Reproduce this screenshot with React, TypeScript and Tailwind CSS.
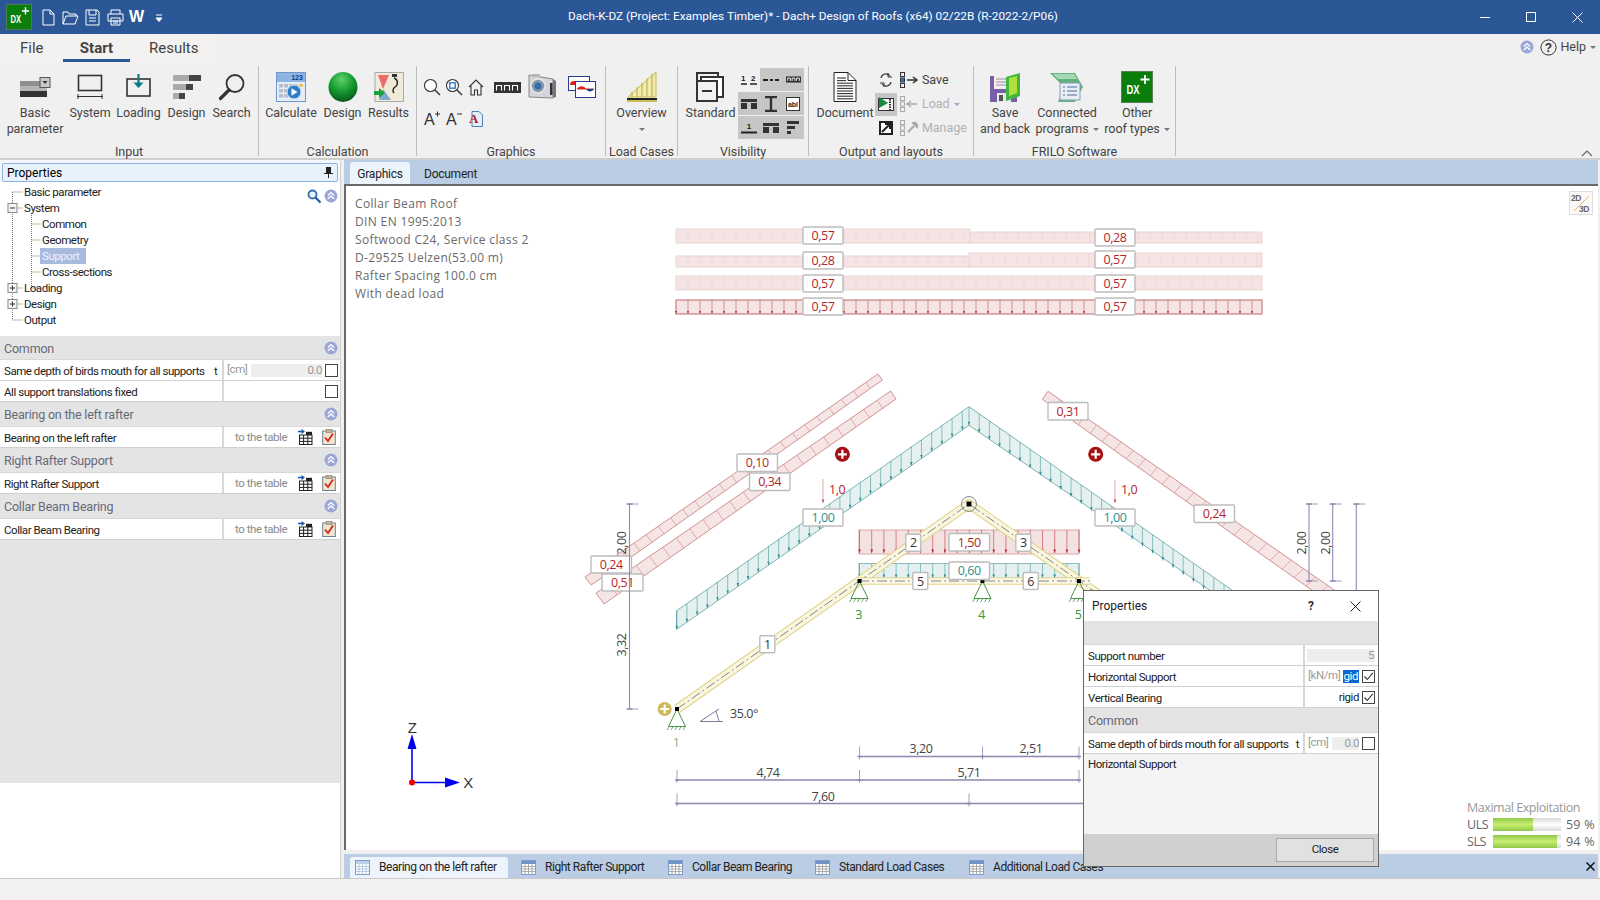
import type { ReactNode } from 'react';

const range = (from: number, to: number, step: number) => {
  const out: number[] = [];
  for (let v = from; v <= to; v += step) out.push(v);
  return out;
};

/* ---------- small icons ---------- */

function DoubleChevron({ size = 14 }: { size?: number }) {
  return (
    <svg width={size} height={size} viewBox="0 0 14 14">
      <circle cx="7" cy="7" r="6.5" fill="#9aa6d8" />
      <path d="M3.8 6.6 7 3.6l3.2 3M3.8 10 7 7l3.2 3" fill="none" stroke="#fff" strokeWidth="1.4" />
    </svg>
  );
}

function DxLogo({ size }: { size: number }) {
  return (
    <svg width={size} height={size} viewBox="0 0 32 32">
      <rect x="0.5" y="0.5" width="31" height="31" fill="#0a7d0a" stroke="#5c7d5c" />
      <text x="12" y="23" textAnchor="middle" fontSize="12.5" fontWeight="700" fill="#fff" textLength="13" lengthAdjust="spacingAndGlyphs" fontFamily="Liberation Sans">DX</text>
      <path d="M24 4v9M19.5 8.5h9" stroke="#fff" strokeWidth="1.8" />
    </svg>
  );
}

function TableLink() {
  return (
    <svg width="15" height="16" viewBox="0 0 15 16">
      <path d="M0 2.5h4" stroke="#1c5aa0" strokeWidth="1.6" />
      <path d="M3.5 0 7 2.5 3.5 5z" fill="#1c5aa0" />
      <rect x="1.5" y="6" width="12.5" height="9.5" fill="#fff" stroke="#222" />
      <path d="M1.5 9.2h12.5M1.5 12.4h12.5M5.6 6v9.5M9.8 6v9.5" stroke="#222" />
      <rect x="8" y="2.8" width="6" height="3.2" fill="#222" />
    </svg>
  );
}

function ClipCheck() {
  return (
    <svg width="14" height="16" viewBox="0 0 14 16">
      <rect x="0.7" y="2" width="12.6" height="13.5" fill="#f1e6cf" stroke="#6f7f94" />
      <rect x="4" y="0.5" width="6" height="3" fill="#c9b48a" stroke="#777" strokeWidth="0.6" />
      <path d="M3 8.5 6 12l5-7.5" fill="none" stroke="#d3261c" strokeWidth="1.8" />
    </svg>
  );
}

function TabTable({ active }: { active?: boolean }) {
  return (
    <svg width="15" height="15" viewBox="0 0 15 15">
      <rect x="0.5" y="0.5" width="14" height="14" fill="#fff" stroke="#7f9cc7" />
      <rect x="1" y="1" width="13" height="3" fill={active ? '#bcd0ea' : '#6f92c9'} />
      <path d="M1 6.5h13M1 9h13M1 11.5h13M4 4v10M7.5 4v10M11 4v10" stroke={active ? '#a9bfdc' : '#9a9a9a'} strokeWidth="0.8" />
    </svg>
  );
}

function Check({ on }: { on?: boolean }) {
  return (
    <span className="w-[13px] h-[13px] border border-[#444] bg-white flex items-center justify-center shrink-0">
      {on && (
        <svg width="11" height="11" viewBox="0 0 11 11">
          <path d="M1.5 5.5 4.3 8.5 9.8 1.8" fill="none" stroke="#333" strokeWidth="1.1" />
        </svg>
      )}
    </span>
  );
}

/* ---------- ribbon icons ---------- */

const icons: Record<string, ReactNode> = {
  basic: (
    <svg width="32" height="20" viewBox="0 0 32 20">
      <rect x="1" y="4" width="27" height="5" fill="#8f8f8f" />
      <rect x="1" y="9" width="27" height="5" fill="#b5b5b5" />
      <rect x="1" y="14" width="27" height="6" fill="#333" />
      <rect x="21" y="0.5" width="10" height="10" fill="#c9c9c9" stroke="#555" />
      <path d="M23.5 4h5L26 7z" fill="#333" />
    </svg>
  ),
  system: (
    <svg width="28" height="26" viewBox="0 0 28 26">
      <rect x="2.5" y="1.5" width="23" height="15" fill="none" stroke="#333" strokeWidth="1.6" />
      <path d="M1 22.5h26M2 20v5M26 20v5" stroke="#333" />
    </svg>
  ),
  loading: (
    <svg width="26" height="26" viewBox="0 0 26 26">
      <rect x="1" y="5" width="23" height="17" fill="none" stroke="#333" strokeWidth="1.6" />
      <path d="M12.5 0v10" stroke="#0f7a80" strokeWidth="2.2" />
      <path d="M7.5 8.5h10l-5 5.5z" fill="#0f7a80" />
    </svg>
  ),
  design: (
    <svg width="30" height="26" viewBox="0 0 30 26">
      <rect x="1" y="1" width="28" height="6" fill="#444" />
      <rect x="1" y="1" width="16" height="6" fill="#aaa" />
      <rect x="1" y="10" width="20" height="6" fill="#444" />
      <rect x="1" y="10" width="13" height="6" fill="#aaa" />
      <rect x="1" y="19" width="12" height="6" fill="#444" />
      <rect x="1" y="19" width="6" height="6" fill="#aaa" />
    </svg>
  ),
  search: (
    <svg width="28" height="28" viewBox="0 0 28 28">
      <circle cx="17" cy="10.5" r="8.5" fill="none" stroke="#333" strokeWidth="1.8" />
      <path d="M11 17 2.5 25.5" stroke="#333" strokeWidth="3.2" strokeLinecap="round" />
    </svg>
  ),
  calculate: (
    <svg width="30" height="30" viewBox="0 0 30 30">
      <rect x="0.5" y="0.5" width="29" height="29" fill="#e4eef9" stroke="#6f96c8" />
      <rect x="1" y="1" width="28" height="9" fill="#8db4e4" />
      <text x="21" y="8" fontSize="7" fontWeight="700" fill="#123a80" textAnchor="middle" fontFamily="Liberation Sans">123</text>
      {[3, 8, 13].map((x) => [12, 17, 22].map((y) => <rect key={`${x}${y}`} x={x} y={y} width="4" height="3.5" fill="#b6bec9" />))}
      <rect x="18" y="12" width="4" height="3" fill="#e8c56a" />
      <rect x="23" y="12" width="4" height="3" fill="#e8c56a" />
      <circle cx="18" cy="20" r="7" fill="#2f7dc8" stroke="#d3e5f7" />
      <path d="M15.5 16.2v7.6l6-3.8z" fill="#fff" />
    </svg>
  ),
  sphere: (
    <svg width="30" height="30" viewBox="0 0 30 30">
      <defs>
        <radialGradient id="sphere" cx="45%" cy="25%" r="75%">
          <stop offset="0" stopColor="#5fd06a" />
          <stop offset="0.55" stopColor="#149a30" />
          <stop offset="1" stopColor="#0a5a1a" />
        </radialGradient>
      </defs>
      <ellipse cx="15" cy="15" rx="14.5" ry="15" fill="url(#sphere)" />
    </svg>
  ),
  results: (
    <svg width="30" height="30" viewBox="0 0 30 30">
      <rect x="1" y="0.5" width="28.5" height="29" fill="#f0ead8" stroke="#aaa" />
      <path d="M4 3h11L9 17z" fill="#f06a6a" />
      <path d="M9 17l8 11H5z" fill="#7fa8d0" />
      <path d="M20 6a5 5 0 0 1 1 9 4 4 0 0 0-1 6" fill="none" stroke="#222" strokeWidth="1.4" />
      <rect x="18" y="2" width="5" height="3" fill="#333" />
      <path d="M0 19h5v-3l6 5-6 5v-3H0z" fill="#18a23c" />
    </svg>
  ),
  overview: (
    <svg width="32" height="32" viewBox="0 0 32 32">
      <path d="M2 26 30 1v25z" fill="#f0ebb0" stroke="#c8bd58" />
      {range(6, 28, 5).map((x) => (
        <path key={x} d={`M${x} ${24 - (x - 2) * 0.88}V26`} stroke="#b9ab3c" />
      ))}
      <rect x="1" y="27" width="30" height="2" fill="#222" />
      <rect x="1" y="29" width="30" height="2" fill="#c8bd58" />
    </svg>
  ),
  standard: (
    <svg width="30" height="30" viewBox="0 0 30 30">
      <rect x="1" y="1" width="21" height="19" fill="none" stroke="#333" strokeWidth="2" />
      <rect x="5" y="5" width="22" height="20" fill="#fff" stroke="#333" strokeWidth="2" />
      <rect x="1" y="9" width="20" height="20" fill="#f1f1f1" stroke="#333" strokeWidth="2" />
      <path d="M6 19h10" stroke="#333" strokeWidth="2" />
    </svg>
  ),
  document: (
    <svg width="24" height="30" viewBox="0 0 24 30">
      <path d="M1 .5h14l8 8v21H1z" fill="#fff" stroke="#222" />
      <path d="M15 .5v8h8" fill="none" stroke="#222" />
      {range(6, 27, 2.6).map((y) => (
        <path key={y} d={`M4 ${y}h${y < 9 ? 9 : 16}`} stroke="#333" strokeWidth="1.1" />
      ))}
    </svg>
  ),
  saveBack: (
    <svg width="32" height="30" viewBox="0 0 32 30">
      <rect x="1" y="4" width="27" height="26" fill="#7a5ea8" />
      <rect x="5" y="4" width="17" height="13" fill="#f3efe6" />
      <path d="M7 7h13M7 10h13M7 13h13" stroke="#9a8ab8" />
      <rect x="8" y="21" width="14" height="9" fill="#e8e8ee" />
      <rect x="10" y="23" width="4" height="6" fill="#555" />
      <path d="M17 5 31 1v23l-14 5z" fill="#3fb83f" />
      <path d="M20 6 28 4v17l-8 3z" fill="#b2e03a" />
    </svg>
  ),
  connected: (
    <svg width="34" height="30" viewBox="0 0 34 30">
      <path d="M0 1h25l8 14-8 15H8l6-15z" fill="#62b27f" />
      <path d="M3 2h21l3 5H8z" fill="#a6d8b4" />
      <rect x="10" y="11" width="20" height="17" fill="#e9eef5" stroke="#8a9db8" />
      <path d="M13 15h2M17 15h10M13 19h2M17 19h10M13 23h2M17 23h10" stroke="#4d6a96" />
    </svg>
  ),
};

const smallIcons = {
  mag: (
    <svg width="18" height="18" viewBox="0 0 18 18">
      <circle cx="7.5" cy="7.5" r="6" fill="#fff" stroke="#333" strokeWidth="1.1" />
      <path d="m12 12 5 5" stroke="#333" strokeWidth="1.4" />
    </svg>
  ),
  magFit: (
    <svg width="18" height="18" viewBox="0 0 18 18">
      <circle cx="7.5" cy="7.5" r="6" fill="#fff" stroke="#333" strokeWidth="1.1" />
      <rect x="4.8" y="4.8" width="5.4" height="5.4" fill="none" stroke="#2a7fd0" strokeWidth="1.4" />
      <path d="m12 12 5 5" stroke="#333" strokeWidth="1.4" />
    </svg>
  ),
  home: (
    <svg width="16" height="17" viewBox="0 0 16 17">
      <path d="M1 8 8 1l7 7M3 7v9h3.5v-5h3v5H13V7" fill="none" stroke="#333" strokeWidth="1.1" />
    </svg>
  ),
  ruler: (
    <svg width="27" height="11" viewBox="0 0 27 11">
      <rect width="27" height="11" fill="#333" />
      <path d="M2.5 8.5v-5h5v5M10.5 8.5v-5h5v5M18.5 8.5v-5h5v5" fill="none" stroke="#fff" strokeWidth="1.1" />
    </svg>
  ),
  camera: (
    <svg width="32" height="30" viewBox="0 0 32 30">
      <path d="M3 3 27 7v19L3 25z" fill="#d3d6da" stroke="#888" />
      <path d="M27 7l3 2v16l-3 1z" fill="#777" />
      <rect x="24" y="11" width="2.5" height="12" fill="#333" />
      <circle cx="12" cy="14" r="7" fill="#8a97a8" stroke="#e8e8e8" strokeWidth="1.5" />
      <circle cx="12" cy="14" r="3.5" fill="#2f6db0" />
      <rect x="6" y="2" width="8" height="3" fill="#b8b8b8" />
    </svg>
  ),
  chart: (
    <svg width="28" height="22" viewBox="0 0 28 22">
      <rect x="0.5" y="0.5" width="21" height="14" fill="#fff" stroke="#24408c" />
      <path d="M2 9a4 4 0 0 1 8 0z" fill="#e0201c" />
      <rect x="7.5" y="5.5" width="20" height="16" fill="#fff" stroke="#24408c" />
      <path d="M9 13h17" stroke="#e0201c" />
      <path d="M9 13a5 5 0 0 1 9 0z" fill="#e0201c" />
      <path d="M18 13h8a4.5 4.5 0 0 1-8 0z" fill="#1a3f9c" />
    </svg>
  ),
  aPlus: (
    <svg width="18" height="20" viewBox="0 0 18 20">
      <text x="1" y="16" fontSize="16" fill="#333" fontFamily="Liberation Sans">A</text>
      <path d="M12 5h5M14.500 2.500v5" stroke="#333" />
    </svg>
  ),
  aMinus: (
    <svg width="18" height="20" viewBox="0 0 18 20">
      <text x="1" y="16" fontSize="16" fill="#333" fontFamily="Liberation Sans">A</text>
      <path d="M12 5h5" stroke="#333" />
    </svg>
  ),
  aDoc: (
    <svg width="15" height="18" viewBox="0 0 15 18">
      <path d="M3 1.500h7l3.500 3.500v11.500H3z" fill="#e6eef8" stroke="#4f7fb8" />
      <text x="0" y="13" fontSize="13" fontWeight="700" fill="#b3201c" fontFamily="Liberation Serif">A</text>
    </svg>
  ),
};

/* ---------- ribbon parts ---------- */

function Caret({ color = '#777' }: { color?: string }) {
  return <span style={{ borderTopColor: color }} className="ml-[4px] w-0 h-0 border-x-[3px] border-x-transparent border-t-[3px]" />;
}

function BigButton({ w, icon, lines, arrow, under }: { w: number; icon: ReactNode; lines: string[]; arrow?: boolean; under?: boolean }) {
  return (
    <div style={{ width: w }} className="flex flex-col items-center shrink-0 whitespace-nowrap">
      <div className="h-[35px] pb-[1px] flex items-center justify-center">{icon}</div>
      {lines.map((l, i) => (
        <div key={l} className="h-[16px] leading-[16px] text-[#444] flex items-center">
          {l}
          {arrow && i === lines.length - 1 && <Caret />}
        </div>
      ))}
      {under && (
        <div className="h-[16px] flex items-center -ml-[4px]">
          <Caret />
        </div>
      )}
    </div>
  );
}

function Group({ w, label, children }: { w: number; label: string; children: ReactNode }) {
  return (
    <>
      <div style={{ width: w }} className="h-[94px] flex flex-col shrink-0">
        <div className="flex-1 flex pt-[4px]">{children}</div>
        <div className="h-[16px] leading-[16px] text-center text-[#444] whitespace-nowrap">{label}</div>
      </div>
      <div className="w-px h-[90px] bg-[#bdbdbd] shrink-0" />
    </>
  );
}

function VisCell({ children, gray = true }: { children: ReactNode; gray?: boolean }) {
  return <div className={`w-[22px] h-[23px] flex items-center justify-center ${gray ? 'bg-[#c6c6c6]' : ''}`}>{children}</div>;
}

function SmallAction({ icon, glyph, label, dim, arrow }: { icon: ReactNode; glyph: ReactNode; label: string; dim?: boolean; arrow?: boolean }) {
  return (
    <div className="h-[24px] flex items-center">
      <div className={`w-[22px] h-[23px] flex items-center justify-center ${label === 'Load' ? 'bg-[#c6c6c6]' : ''}`}>{icon}</div>
      <div className="w-[25px] pl-[3px] flex items-center">{glyph}</div>
      <span className={dim ? 'text-[#b0b0b0]' : 'text-[#444]'}>{label}</span>
      {arrow && <Caret color="#aaa" />}
    </div>
  );
}

function ListGlyph({ mark, color }: { mark: ReactNode; color: string }) {
  return (
    <svg width="20" height="16" viewBox="0 0 20 16">
      <rect x="0.5" y="0.5" width="4" height="4" fill="none" stroke={color} />
      <rect x="0.5" y="6" width="4" height="4" fill={color === '#333' ? '#2a7fd0' : 'none'} stroke={color} />
      <rect x="0.5" y="11.5" width="4" height="4" fill="none" stroke={color} />
      {mark}
    </svg>
  );
}

function Ribbon() {
  return (
    <div className="h-[126px] bg-[#f0f0f0] border-b-2 border-[#cfcfcf] flex flex-col shrink-0">
      <div className="h-[28px] flex text-[15px] text-[#444] items-stretch">
        <div className="w-[216px] bg-[#f3f2f1] flex">
          <div className="pl-[20px] w-[63px] leading-[29px]">File</div>
          <div className="w-[67px] text-center font-bold leading-[29px] border-b-[3px] border-[#2b5797]">Start</div>
          <div className="pl-[19px] leading-[29px]">Results</div>
        </div>
        <div className="ml-auto flex items-center h-[24px] text-[12.5px] mt-px pr-[4px]">
          <DoubleChevron />
          <svg className="ml-[6px]" width="17" height="17" viewBox="0 0 17 17">
            <circle cx="8.5" cy="8.5" r="7.6" fill="none" stroke="#333" />
            <text x="8.5" y="13" textAnchor="middle" fontSize="12" fontWeight="700" fill="#333" fontFamily="Liberation Sans">?</text>
          </svg>
          <span className="ml-[3px] text-[#444]">Help</span>
          <Caret />
        </div>
      </div>
      <div className="flex items-start pt-[4px] text-[12.5px] tracking-[-0.05px] relative">
        <Group w={258} label="Input">
          <div className="w-[7px]" />
          <BigButton w={56} icon={icons.basic} lines={['Basic', 'parameter']} />
          <BigButton w={54} icon={icons.system} lines={['System']} />
          <BigButton w={43} icon={icons.loading} lines={['Loading']} />
          <BigButton w={53} icon={icons.design} lines={['Design']} />
          <BigButton w={37} icon={icons.search} lines={['Search']} />
        </Group>
        <Group w={157} label="Calculation">
          <BigButton w={64} icon={icons.calculate} lines={['Calculate']} />
          <BigButton w={39} icon={icons.sphere} lines={['Design']} />
          <BigButton w={53} icon={icons.results} lines={['Results']} />
        </Group>
        <Group w={188} label="Graphics">
          <div className="flex flex-col pl-[4px]">
            <div className="h-[34px] flex items-center">
              <div className="w-[22px] flex justify-center">{smallIcons.mag}</div>
              <div className="w-[22px] flex justify-center">{smallIcons.magFit}</div>
              <div className="w-[22px] flex justify-center">{smallIcons.home}</div>
              <div className="ml-[3px] w-[34px] flex justify-center">{smallIcons.ruler}</div>
              <div className="ml-[2px] w-[32px] flex justify-center">{smallIcons.camera}</div>
              <div className="ml-[8px] w-[32px] flex justify-center">{smallIcons.chart}</div>
            </div>
            <div className="h-[30px] flex items-center">
              <div className="w-[22px] flex justify-center">{smallIcons.aPlus}</div>
              <div className="w-[22px] flex justify-center">{smallIcons.aMinus}</div>
              <div className="w-[22px] flex justify-center">{smallIcons.aDoc}</div>
            </div>
          </div>
        </Group>
        <Group w={71} label="Load Cases">
          <BigButton w={71} icon={icons.overview} lines={['Overview']} under />
        </Group>
        <Group w={130} label="Visibility">
          <div className="ml-[5px] w-[55px]">
            <BigButton w={55} icon={icons.standard} lines={['Standard']} />
          </div>
          <div className="flex flex-col -mt-[2px] gap-px w-[66px]">
            <div className="flex">
              <VisCell gray={false}>
                <svg width="16" height="14" viewBox="0 0 16 14">
                  <text x="0" y="8" fontSize="8" fontWeight="700" fill="#222" fontFamily="Liberation Sans">1</text>
                  <text x="10" y="8" fontSize="8" fontWeight="700" fill="#222" fontFamily="Liberation Sans">2</text>
                  <path d="M0 11h6M9 11h7" stroke="#222" strokeWidth="1.5" />
                </svg>
              </VisCell>
              <VisCell>
                <svg width="16" height="4" viewBox="0 0 16 4"><path d="M0 2h5M7 2h3M12 2h4" stroke="#222" strokeWidth="2" /></svg>
              </VisCell>
              <VisCell>{<svg width="15" height="7" viewBox="0 0 27 11"><rect width="27" height="11" fill="#333" /><path d="M3 8V3h5v5M11 8V3h5v5M19 8V3h5v5" fill="none" stroke="#fff" strokeWidth="1.6" /></svg>}</VisCell>
            </div>
            <div className="flex">
              <VisCell>
                <svg width="16" height="10" viewBox="0 0 16 10"><path d="M0 0h16v3H0zM0 4h6v6H0zM10 4h6v6h-6z" fill="#333" /></svg>
              </VisCell>
              <VisCell>
                <svg width="14" height="16" viewBox="0 0 14 16"><path d="M1 1h12M1 15h12M7 1v14" stroke="#333" strokeWidth="2.4" /></svg>
              </VisCell>
              <VisCell>
                <svg width="14" height="14" viewBox="0 0 14 14">
                  <rect x="0.5" y="0.5" width="13" height="13" fill="#fff" stroke="#333" />
                  <text x="7" y="10" textAnchor="middle" fontSize="7" fontWeight="700" fill="#222" fontFamily="Liberation Sans">abl</text>
                </svg>
              </VisCell>
            </div>
            <div className="flex">
              <VisCell>
                <svg width="16" height="13" viewBox="0 0 16 13">
                  <text x="8" y="8" textAnchor="middle" fontSize="8" fontWeight="700" fill="#222" fontFamily="Liberation Sans">1</text>
                  <path d="M0 11.5h16" stroke="#222" strokeWidth="2" />
                </svg>
              </VisCell>
              <VisCell>
                <svg width="16" height="10" viewBox="0 0 16 10"><path d="M0 0h16v3H0zM0 4h6v6H0zM10 4h6v6h-6z" fill="#333" /></svg>
              </VisCell>
              <VisCell>
                <svg width="12" height="13" viewBox="0 0 12 13"><path d="M0 0h12v3H0zM0 5h8v3H0zM0 10h4v3H0z" fill="#333" /></svg>
              </VisCell>
            </div>
          </div>
        </Group>
        <Group w={164} label="Output and layouts">
          <div className="ml-[9px] w-[54px]">
            <BigButton w={54} icon={icons.document} lines={['Document']} />
          </div>
          <div className="flex flex-col -mt-[2px] ml-[3px]">
            <SmallAction
              label="Save"
              icon={
                <svg width="14" height="16" viewBox="0 0 14 16">
                  <path d="M2 6a5 5 0 0 1 9-2M12 10a5 5 0 0 1-9 2" fill="none" stroke="#333" strokeWidth="1.2" />
                  <path d="M9 1v4h4M5 15v-4H1" fill="none" stroke="#333" strokeWidth="1" />
                </svg>
              }
              glyph={<ListGlyph color="#333" mark={<path d="M7 8h9m-3-3 4 3-4 3" fill="none" stroke="#333" strokeWidth="1.5" />} />}
            />
            <SmallAction
              label="Load"
              dim
              arrow
              icon={
                <svg width="16" height="14" viewBox="0 0 16 14">
                  <rect x="0.5" y="1.5" width="15" height="12" fill="#f4f4f4" stroke="#333" />
                  <path d="M12 2v11" stroke="#333" strokeWidth="2" strokeDasharray="1.5 1" />
                  <path d="M1 0v11l9-5z" fill="#178a3c" />
                </svg>
              }
              glyph={<ListGlyph color="#aaa" mark={<path d="M17 8H8m3-3-4 3 4 3" fill="none" stroke="#aaa" strokeWidth="1.5" />} />}
            />
            <SmallAction
              label="Manage"
              dim
              icon={
                <svg width="14" height="14" viewBox="0 0 14 14">
                  <rect x="1" y="1" width="12" height="12" fill="#fff" stroke="#222" strokeWidth="2" />
                  <path d="M3 11 10 4M6 3h5v5" fill="none" stroke="#222" strokeWidth="2" />
                </svg>
              }
              glyph={<ListGlyph color="#aaa" mark={<path d="m8 12 6-6M13 3a3 3 0 0 1 4 4z" fill="#aaa" stroke="#aaa" strokeWidth="2" />} />}
            />
          </div>
        </Group>
        <Group w={201} label="FRILO Software">
          <BigButton w={62} icon={icons.saveBack} lines={['Save', 'and back']} />
          <BigButton w={62} icon={icons.connected} lines={['Connected', 'programs']} arrow />
          <div className="ml-[7px]">
            <BigButton w={64} icon={<DxLogo size={32} />} lines={['Other', 'roof types']} arrow />
          </div>
        </Group>
        <svg className="absolute left-[1581px] top-[88px]" width="12" height="7" viewBox="0 0 12 7">
          <path d="m1 6 5-5 5 5" fill="none" stroke="#666" strokeWidth="1.2" />
        </svg>
      </div>
    </div>
  );
}

/* ---------- left panel ---------- */

const tree = [
  { t: 'Basic parameter', x: 24 },
  { t: 'System', x: 24 },
  { t: 'Common', x: 42 },
  { t: 'Geometry', x: 42 },
  { t: 'Support', x: 42, sel: true },
  { t: 'Cross-sections', x: 42 },
  { t: 'Loading', x: 24 },
  { t: 'Design', x: 24 },
  { t: 'Output', x: 24 },
];

function TreeLines() {
  const dot = { stroke: '#777', strokeDasharray: '1 1', fill: 'none' };
  return (
    <svg className="absolute left-0 top-0" width="45" height="154" viewBox="0 0 45 154">
      <path d="M12.5 10v128M12.5 10H23M12.5 26H23M12.5 106H23M12.5 122H23M12.5 138H23M31.5 31v75M31.5 42H41M31.5 58H41M31.5 74H41M31.5 90H41M31.5 106H41" {...dot} />
      {[26, 106, 122].map((y) => (
        <g key={y}>
          <rect x="8" y={y - 4.5} width="9" height="9" fill="#f4f4f4" stroke="#8a8a8a" />
          <path d={y === 26 ? `M10 ${y}h5` : `M10 ${y}h5M12.5 ${y - 2.5}v5`} stroke="#333" />
        </g>
      ))}
    </svg>
  );
}

function Section({ title, h = 25 }: { title: string; h?: number }) {
  return (
    <div style={{ height: h }} className="bg-[#e4e4e4] border-b border-[#d8d8d8] flex items-center justify-between pl-[4px] pr-[2px] text-[12.5px] tracking-[-0.2px] text-[#666a78]">
      <span className="pt-[3px]">{title}</span>
      <DoubleChevron />
    </div>
  );
}

function PropRow({ label, children }: { label: string; children: ReactNode }) {
  return (
    <div className="h-[21px] bg-white border-b border-[#d0d0d0] flex text-[#222]">
      <div className="w-[224px] shrink-0 pl-[4px] border-r-2 border-[#d8d8d8] leading-[22px] whitespace-pre">{label}</div>
      <div className="flex-1 flex items-center">{children}</div>
    </div>
  );
}

function TableRow({ label }: { label: string }) {
  return (
    <PropRow label={label}>
      <span className="ml-[11px] w-[63px] pt-[2px] text-[#8a8a8a]">to the table</span>
      <TableLink />
      <span className="ml-[9px]">
        <ClipCheck />
      </span>
    </PropRow>
  );
}

function LeftPanel() {
  return (
    <div className="w-[341px] flex flex-col shrink-0 bg-white border-r border-[#d0d0d0] text-[11.5px] tracking-[-0.45px]">
      <div className="h-[22px] bg-[#f4f7fb] pt-[3px] px-[2px] shrink-0">
        <div className="h-[19px] border border-[#8db2e3] rounded-[2px] bg-[#e8f2fc] flex items-center justify-between pl-[4px] pr-[4px] text-black text-[12px] tracking-normal">
          <span>Properties</span>
          <svg width="9" height="11" viewBox="0 0 9 11">
            <path d="M2 0h5v6h2v1H5v4H4V7H0V6h2z" fill="#222" />
          </svg>
        </div>
      </div>
      <div className="h-[154px] relative pt-[2px] shrink-0 text-[#222]">
        <TreeLines />
        {tree.map((n) => (
          <div key={n.t} className="h-[16px] leading-[16px] relative" style={{ paddingLeft: n.x }}>
            <span className={n.sel ? 'bg-[#a7bbdf] text-[#eef2fa] inline-block -ml-[2px] pl-[2px] w-[46px]' : ''}>{n.t}</span>
          </div>
        ))}
        <div className="absolute right-[2px] top-[7px] flex items-center gap-[3px]">
          <svg width="14" height="14" viewBox="0 0 14 14">
            <circle cx="5.5" cy="5.5" r="4" fill="#e8f2fc" stroke="#2a6fb0" strokeWidth="1.8" />
            <path d="m8.5 8.5 5 5" stroke="#1f5a96" strokeWidth="2.2" />
          </svg>
          <DoubleChevron />
        </div>
      </div>
      <Section title="Common" h={24} />
      <PropRow label="Same depth of birds mouth for all supports    t">
        <span className="ml-[3px] w-[24px] text-[#999]">[cm]</span>
        <span className="w-[71px] h-[13px] bg-[#eeeeee] text-right text-[#999] leading-[13px]">0.0</span>
        <span className="ml-[3px]">
          <Check />
        </span>
      </PropRow>
      <PropRow label="All support translations fixed">
        <span className="ml-[101px]">
          <Check />
        </span>
      </PropRow>
      <Section title="Bearing on the left rafter" />
      <TableRow label="Bearing on the left rafter" />
      <Section title="Right Rafter Support" />
      <TableRow label="Right Rafter Support" />
      <Section title="Collar Beam Bearing" />
      <TableRow label="Collar Beam Bearing" />
      <div className="h-[243px] bg-[#e4e4e4] shrink-0" />
      <div className="flex-1 bg-white" />
    </div>
  );
}

/* ---------- drawing ---------- */

const RED = '#b3262a';
const TEAL = '#2f8f92';
const DIM = '#8d89b0';
const drawFont = 'Open Sans, sans-serif';

function Label({ x1, x2, y1, y2, t, c }: { x1: number; x2: number; y1: number; y2: number; t: string; c: string }) {
  return (
    <g>
      <rect x={x1} y={y1} width={x2 - x1} height={y2 - y1} fill="#fff" stroke="#bdbdbd" strokeWidth="1.4" rx="1" />
      <text x={(x1 + x2) / 2} y={(y1 + y2) / 2 + 4.5} textAnchor="middle" fontSize="12.5" fill={c} fontFamily={drawFont}>
        {t}
      </text>
    </g>
  );
}

function Bar({ x1, x2, y1, y2, strong }: { x1: number; x2: number; y1: number; y2: number; strong?: boolean }) {
  const stroke = strong ? '#c97f80' : '#ecd3d3';
  return (
    <g>
      <rect x={x1} y={y1} width={x2 - x1} height={y2 - y1} fill="#f4e4e4" stroke={stroke} strokeWidth={strong ? 1.2 : 1} />
      {range(x1 + 12, x2, 12).map((x) => (
        <path key={x} d={`M${x} ${y1}V${y2}`} stroke={stroke} strokeWidth="0.8" />
      ))}
      {strong &&
        range(x1, x2 + 1, 12).map((x) => (
          <path key={x} d={`M${x - 1} ${y2 - 3}h2l-1 3z`} fill={RED} />
        ))}
    </g>
  );
}

type P = [number, number];
function Strip({ a, b, c, d, n }: { a: P; b: P; c: P; d: P; n: number }) {
  return (
    <g>
      <polygon points={[a, b, c, d].map((p) => p.join(',')).join(' ')} fill="#f5e5e5" stroke="#cb8688" strokeWidth="0.9" />
      {range(1, n - 1, 1).map((i) => {
        const t = i / n;
        return <path key={i} d={`M${a[0] + (b[0] - a[0]) * t} ${a[1] + (b[1] - a[1]) * t}L${d[0] + (c[0] - d[0]) * t} ${d[1] + (c[1] - d[1]) * t}`} stroke="#d99a9b" strokeWidth="0.8" />;
      })}
    </g>
  );
}

function Arrow({ x, y1, y2, c }: { x: number; y1: number; y2: number; c: string }) {
  return (
    <g>
      <path d={`M${x} ${y1}V${y2}`} stroke={c} strokeWidth="0.8" strokeOpacity="0.65" />
      <path d={`M${x - 1.3} ${y2 - 3.5}h2.6l-1.3 3.5z`} fill={c} />
    </g>
  );
}

function Support({ x, y, n, c = '#2f9a2f' }: { x: number; y: number; n: string; c?: string }) {
  return (
    <g>
      <path d={`M${x} ${y}l-8.5 17.5h17z`} fill="none" stroke="#4a944a" />
      {range(x - 8, x + 8, 4).map((v) => (
        <path key={v} d={`M${v} ${y + 18}l-2 3`} stroke="#4a944a" strokeWidth="0.8" />
      ))}
      <text x={x - 1} y={y + 38} textAnchor="middle" fontSize="12.5" fill={c} fontFamily={drawFont}>
        {n}
      </text>
      <rect x={x - 2} y={y - 2} width="4" height="4" fill="#000" />
    </g>
  );
}

function HDim({ y, xs, end }: { y: number; xs: number[]; end: number }) {
  return (
    <g stroke={DIM}>
      <path d={`M${xs[0]} ${y}H${end}`} strokeWidth="1.3" />
      {xs.map((x) => (
        <g key={x}>
          <path d={`M${x} ${y - 10}V${y + 3}`} strokeWidth="0.8" />
          <path d={`M${x - 2} ${y}h4`} strokeWidth="1.6" />
        </g>
      ))}
    </g>
  );
}

function VDim({ x, ys }: { x: number; ys: number[] }) {
  return (
    <g stroke={DIM}>
      <path d={`M${x} ${ys[0]}V${ys[ys.length - 1]}`} strokeWidth="1.1" />
      {ys.map((y) => (
        <g key={y}>
          <path d={`M${x - 2} ${y}H${x + 9}`} strokeWidth="0.8" />
          <path d={`M${x - 3} ${y}H${x + 3}`} strokeWidth="1.4" />
        </g>
      ))}
    </g>
  );
}

function DimText({ x, y, t, rot }: { x: number; y: number; t: string; rot?: boolean }) {
  return (
    <text x={x} y={y} textAnchor="middle" fontSize="12.5" fill="#444" fontFamily={drawFont} transform={rot ? `rotate(-90 ${x} ${y})` : undefined}>
      {t}
    </text>
  );
}

function PlusDot({ x, y, c, r = 7.5 }: { x: number; y: number; c: string; r?: number }) {
  return (
    <g>
      <circle cx={x} cy={y} r={r} fill={c} />
      <path d={`M${x - 4.5} ${y}h9M${x} ${y - 4.5}v9`} stroke="#fff" strokeWidth="2.2" />
    </g>
  );
}

function Drawing() {
  const tealUpperL = (x: number) => 610.7 - (x - 676.7) * 0.698;
  const tealLowerL = (x: number) => 629.3 - (x - 676.7) * 0.698;
  const tealUpperR = (x: number) => 406.7 + (x - 969) * 0.698;
  const tealLowerR = (x: number) => 425.3 + (x - 969) * 0.698;
  const member = 'M677 709 969 504 1108 601';
  return (
    <svg className="absolute left-0 top-0" width="1252" height="663" viewBox="346 186 1252 663">
      {/* load pictograms along the top */}
      <Bar x1={970} x2={1262} y1={232} y2={243} />
      <Bar x1={676} x2={970} y1={229} y2={243} />
      <Bar x1={676} x2={970} y1={256} y2={267} />
      <Bar x1={969} x2={1262} y1={253} y2={267} />
      <Bar x1={676} x2={1262} y1={276} y2={290} />
      <Bar x1={676} x2={1262} y1={300} y2={314} strong />
      <Label x1={803} x2={843} y1={227} y2={244} t="0,57" c={RED} />
      <Label x1={1095} x2={1135} y1={229} y2={246} t="0,28" c={RED} />
      <Label x1={803} x2={843} y1={252} y2={269} t="0,28" c={RED} />
      <Label x1={1095} x2={1135} y1={251} y2={268} t="0,57" c={RED} />
      <Label x1={803} x2={843} y1={275} y2={292} t="0,57" c={RED} />
      <Label x1={1095} x2={1135} y1={275} y2={292} t="0,57" c={RED} />
      <Label x1={803} x2={843} y1={298} y2={315} t="0,57" c={RED} />
      <Label x1={1095} x2={1135} y1={298} y2={315} t="0,57" c={RED} />

      {/* wind strips */}
      <Strip a={[585, 577]} b={[878, 374]} c={[882.4, 380]} d={[591.3, 585]} n={24} />
      <Strip a={[596, 593]} b={[890.6, 391]} c={[896, 399]} d={[604, 604]} n={22} />
      <Strip a={[1048, 391.3]} b={[1340, 594]} c={[1330, 603]} d={[1042.3, 399.3]} n={24} />
      <PlusDot x={842.4} y={454.3} c="#a80f14" />
      <PlusDot x={1095.7} y={454.3} c="#a80f14" />

      {/* snow / dead load on rafters */}
      <polygon
        points={`676.7,610.7 969,406.7 1262,611 1262,626 969,425.3 676.7,629.3`}
        fill="#e5f1f1"
        stroke="#7fb3b3"
      />
      {range(676.7, 965, 10.2).map((x) => (
        <Arrow key={x} x={x} y1={tealUpperL(x)} y2={tealLowerL(x)} c={TEAL} />
      ))}
      {range(969, 1262, 10.2).map((x) => (
        <Arrow key={x} x={x} y1={tealUpperR(x)} y2={tealLowerR(x)} c={TEAL} />
      ))}

      <Arrow x={823} y1={479} y2={503} c="#c05a5e" />
      <Arrow x={1115} y1={480} y2={503} c="#c05a5e" />
      <text x={829} y={494} fontSize="12.5" fill={RED} fontFamily={drawFont}>1,0</text>
      <text x={1121} y={494} fontSize="12.5" fill={RED} fontFamily={drawFont}>1,0</text>

      {/* collar loads */}
      <rect x="859" y="530" width="220" height="24" fill="#f4e2e2" stroke="#d9a5a6" />
      {range(859.5, 1080, 12.2).map((x) => (
        <Arrow key={x} x={x} y1={530} y2={553} c={RED} />
      ))}
      <rect x="859" y="563.5" width="220" height="15" fill="#e5f1f1" stroke="#8fbcbc" />
      {range(859.5, 1080, 12.2).map((x) => (
        <Arrow key={x} x={x} y1={563.5} y2={578} c={TEAL} />
      ))}

      {/* members */}
      <path d={member} fill="none" stroke="#e0d384" strokeWidth="9.5" />
      <path d={member} fill="none" stroke="#fbf8e8" strokeWidth="7.5" strokeOpacity="0.92" />
      <path d="M859 581H1090" fill="none" stroke="#e0d384" strokeWidth="7.5" />
      <path d="M859 581H1090" fill="none" stroke="#fbf8e8" strokeWidth="5.5" />
      <path d={member} fill="none" stroke="#666" strokeWidth="0.8" strokeDasharray="10 3 2 3" />
      <path d="M859 581H1090" fill="none" stroke="#888" strokeWidth="1" strokeDasharray="10 3 2 3" />
      <circle cx="969" cy="504" r="7.5" fill="none" stroke="#888" />
      <rect x="966.5" y="501.5" width="5" height="5" fill="#000" />

      <PlusDot x={664.7} y={709} c="#cdb85c" r={7} />
      <Support x={677} y={709} n="1" c="#7fb87f" />
      <Support x={859.5} y={581} n="3" />
      <Support x={982.5} y={581} n="4" />
      <Support x={1079} y={581} n="5" />

      {/* member numbers */}
      {[
        [767.3, 644.3, '1'],
        [913.3, 542.7, '2'],
        [1023.3, 542.7, '3'],
        [920.3, 581, '5'],
        [1030.7, 581, '6'],
      ].map(([x, y, t]) => (
        <g key={String(t)}>
          <rect x={(x as number) - 7.5} y={(y as number) - 8.5} width="15" height="17" fill="#fff" stroke="#bdbdbd" strokeWidth="1.4" rx="1" />
          <text x={x} y={(y as number) + 4.5} textAnchor="middle" fontSize="12.5" fill="#333" fontFamily={drawFont}>{t}</text>
        </g>
      ))}

      <Label x1={737} x2={777.5} y1={454} y2={471.5} t="0,10" c={RED} />
      <Label x1={749.5} x2={790} y1={473} y2={490.5} t="0,34" c={RED} />
      <Label x1={591} x2={631.5} y1={556} y2={573} t="0,24" c={RED} />
      <Label x1={602} x2={643} y1={574} y2={591} t="0,51" c={RED} />
      <Label x1={1048} x2={1088} y1={402.5} y2={420} t="0,31" c={RED} />
      <Label x1={1194} x2={1234.5} y1={505} y2={522.5} t="0,24" c={RED} />
      <Label x1={803} x2={843} y1={509} y2={526} t="1,00" c={TEAL} />
      <Label x1={1095} x2={1135} y1={509} y2={526} t="1,00" c={TEAL} />
      <Label x1={949} x2={989.5} y1={533.5} y2={551} t="1,50" c={RED} />
      <Label x1={949} x2={989.5} y1={562} y2={579.5} t="0,60" c={TEAL} />

      {/* dimensions */}
      <VDim x={629.5} ys={[504, 709]} />
      <DimText x={626} y={543} t="2,00" rot />
      <DimText x={626} y={645} t="3,32" rot />
      <VDim x={1309} ys={[504, 581]} />
      <VDim x={1332.7} ys={[504, 581]} />
      <VDim x={1356.3} ys={[504, 600]} />
      <DimText x={1306} y={543} t="2,00" rot />
      <DimText x={1330} y={543} t="2,00" rot />
      <HDim y={756.5} xs={[859.5, 982.5, 1079]} end={1079} />
      <HDim y={780} xs={[677, 859.5, 1079]} end={1079} />
      <HDim y={803.5} xs={[677, 969]} end={1084} />
      <DimText x={921} y={753} t="3,20" />
      <DimText x={1031} y={753} t="2,51" />
      <DimText x={768} y={777} t="4,74" />
      <DimText x={969} y={777} t="5,71" />
      <DimText x={823} y={801} t="7,60" />

      {/* roof pitch */}
      <path d="M700 721.5h23M700 721.5l19-12.5M716 711l3 10" fill="none" stroke="#7d79a3" />
      <text x={730} y={718} fontSize="12.5" fill="#444" fontFamily={drawFont}>35.0°</text>

      {/* axes */}
      <path d="M412 782.5V745" stroke="#0000f0" strokeWidth="1.6" />
      <path d="M407.5 749 412 734l4.5 15z" fill="#0000f0" />
      <path d="M412 782.5h36" stroke="#0000f0" strokeWidth="1.6" />
      <path d="M445 777.5 460 782.5l-15 5z" fill="#0000f0" />
      <circle cx="412" cy="782.5" r="3" fill="#f00000" />
      <text x={412} y={733} textAnchor="middle" fontSize="15" fill="#333" fontFamily="Liberation Sans">Z</text>
      <text x={468} y={788} textAnchor="middle" fontSize="15" fill="#333" fontFamily="Liberation Sans">X</text>
    </svg>
  );
}

function Exploit({ name, pct, fill }: { name: string; pct: string; fill: number }) {
  return (
    <div className="flex items-center h-[17px]">
      <span className="w-[26px] pt-px">{name}</span>
      <span className="w-[68px] h-[13px] bg-gradient-to-b from-[#d8d8d8] via-[#ffffff] to-[#d8d8d8] relative">
        <span style={{ width: fill }} className="absolute left-0 top-0 bottom-0 bg-gradient-to-b from-[#8fc84a] via-[#c8ee70] to-[#8fc84a]" />
      </span>
      <span className="ml-[5px] pt-px whitespace-nowrap tracking-[0.2px]">{pct}</span>
    </div>
  );
}

function Canvas() {
  return (
    <div className="h-[666px] bg-white border-l-2 border-t-2 border-[#6a6a6a] relative overflow-hidden">
      <Drawing />
      <div className="relative pl-[9px] pt-[9px] text-[12px] tracking-[0.35px] text-[#6a6a6a] [font-family:'Open_Sans',sans-serif]">
        {['Collar Beam Roof', 'DIN EN 1995:2013', 'Softwood C24, Service class 2', 'D-29525 Uelzen(53.00 m)', 'Rafter Spacing 100.0 cm', 'With dead load'].map((l) => (
          <div key={l} className="h-[18px] leading-[18px]">{l}</div>
        ))}
      </div>
      <div className="absolute right-[5px] top-[5px] w-[24px] h-[24px] border border-[#ddd] bg-[#fafafa]">
        <svg width="22" height="22" viewBox="0 0 22 22">
          <path d="M4 19 19 4" stroke="#f0b060" />
          <text x="1" y="9" fontSize="8.5" fontWeight="700" fill="#666" fontFamily="Liberation Sans">2D</text>
          <text x="9" y="20" fontSize="8.5" fontWeight="700" fill="#666" fontFamily="Liberation Sans">3D</text>
        </svg>
      </div>
      <div className="absolute left-[1121px] top-[613px] text-[#666] text-[12.5px] [font-family:'Open_Sans',sans-serif] w-[130px]">
        <div className="text-[#999] leading-[17px] whitespace-nowrap">Maximal Exploitation</div>
        <Exploit name="ULS" pct="59 %" fill={40} />
        <Exploit name="SLS" pct="94 %" fill={64} />
      </div>
    </div>
  );
}

/* ---------- dialog ---------- */

function DlgRow({ label, children }: { label: string; children: ReactNode }) {
  return (
    <div className="h-[21px] bg-white border-b border-[#d0d0d0] flex">
      <div className="w-[221px] shrink-0 pl-[4px] border-r-2 border-[#d8d8d8] leading-[22px] whitespace-pre">{label}</div>
      <div className="flex-1 flex items-center pr-[3px]">{children}</div>
    </div>
  );
}

function PropertiesDialog() {
  return (
    <div className="absolute left-[1083px] top-[590px] w-[296px] h-[277px] border border-[#666] bg-[#f4f4f4] flex flex-col text-[11.5px] tracking-[-0.45px] text-[#222]">
      <div className="h-[30px] bg-white flex items-center pl-[8px] shrink-0 text-[12px] tracking-normal">
        <span className="flex-1">Properties</span>
        <span className="font-bold text-[#333] mr-[36px]">?</span>
        <svg className="mr-[17px]" width="11" height="11" viewBox="0 0 11 11">
          <path d="m.5.5 10 10M10.5.5l-10 10" stroke="#222" />
        </svg>
      </div>
      <div className="h-[24px] bg-[#e4e4e4] border-b border-[#d8d8d8] shrink-0" />
      <DlgRow label="Support number">
        <span className="ml-[2px] flex-1 h-[13px] leading-[13px] bg-[#eeeeee] text-right text-[#999] pr-[1px]">5</span>
      </DlgRow>
      <DlgRow label="Horizontal Support">
        <span className="ml-[3px] text-[#999]">[kN/m]</span>
        <span className="ml-auto bg-[#0a66d0] text-white leading-[13px] px-px">gid</span>
        <span className="ml-[3px]"><Check on /></span>
      </DlgRow>
      <DlgRow label="Vertical Bearing">
        <span className="ml-auto pt-px">rigid</span>
        <span className="ml-[3px]"><Check on /></span>
      </DlgRow>
      <div className="h-[25px] bg-[#e4e4e4] border-b border-[#d8d8d8] flex items-center pl-[4px] text-[12.5px] tracking-[-0.2px] text-[#666a78] shrink-0">
        <span className="pt-[3px]">Common</span>
      </div>
      <DlgRow label="Same depth of birds mouth for all supports   t">
        <span className="ml-[3px] w-[24px] text-[#999]">[cm]</span>
        <span className="w-[27px] h-[13px] leading-[13px] bg-[#eeeeee] text-right text-[#999]">0.0</span>
        <span className="ml-[3px]"><Check /></span>
      </DlgRow>
      <div className="flex-1 pl-[4px] pt-[2px] leading-[16px]">Horizontal Support</div>
      <div className="h-[32px] bg-[#d0d0d0] flex justify-end items-center pr-[4px] shrink-0">
        <button className="w-[98px] h-[24px] bg-[#e1e1e1] border border-[#a8a8a8] text-[#222]">Close</button>
      </div>
    </div>
  );
}

/* ---------- page ---------- */

const bottomTabs = [
  { t: 'Bearing on the left rafter', w: 158, active: true },
  { t: 'Right Rafter Support', w: 147 },
  { t: 'Collar Beam Bearing', w: 147 },
  { t: 'Standard Load Cases', w: 154 },
  { t: 'Additional Load Cases', w: 150 },
];

export default function App() {
  return (
    <div className="w-[1600px] h-[900px] relative overflow-hidden flex flex-col bg-[#f0f0ee] [font-family:Roboto,sans-serif]">
      {/* title bar */}
      <div className="h-[34px] bg-[#2b5797] flex items-center text-white shrink-0">
        <div className="w-[164px] flex items-center">
          <div className="ml-[6px] mr-[10px] -mt-[1px]">
            <DxLogo size={26} />
          </div>
          <svg width="84" height="18" viewBox="0 0 84 18" fill="none" stroke="#fff">
            <path d="M1 2h7l4 4v11H1zM8 2v4h4" />
            <path d="M21 16V4h5l1 2h7v2M21 16l3-8h12l-3 8z" />
            <path d="M44 2h11l2 2v13H44zM47 2v5h7V2M47 10h7M47 13h7" />
            <path d="M69 6V2h9v4M66 6h15v7H66zM69 10h9v7h-9zM71 13h5M71 15h5" />
          </svg>
        </div>
        <div className="flex-1 text-center text-[11.8px]">Dach-K-DZ (Project: Examples Timber)* - Dach+ Design of Roofs (x64) 02/22B (R-2022-2/P06)</div>
        <div className="flex w-[138px]">
          <div className="w-[46px] h-[34px] flex items-center justify-center">
            <div className="w-[10px] h-px bg-white" />
          </div>
          <div className="w-[46px] h-[34px] flex items-center justify-center">
            <div className="w-[10px] h-[10px] border border-white" />
          </div>
          <div className="w-[46px] h-[34px] flex items-center justify-center">
            <svg width="11" height="11" viewBox="0 0 11 11">
              <path d="m.5.5 10 10M10.5.5l-10 10" stroke="#fff" />
            </svg>
          </div>
        </div>
      </div>
      <Ribbon />
      <div className="flex-1 flex min-h-0">
        <LeftPanel />
        <div className="flex-1 pl-[3px] pr-[2px] flex flex-col min-w-0 text-[12px] tracking-[-0.45px]">
          <div className="h-[24px] bg-[#bacde4] flex items-end shrink-0 pl-[6px] tracking-[-0.25px]">
            <div className="w-[60px] h-[22px] bg-[#eef4fb] rounded-t-[3px] text-center leading-[24px] text-[#222]">Graphics</div>
            <div className="ml-[14px] h-[22px] leading-[24px] text-[#222]">Document</div>
          </div>
          <Canvas />
          <div className="h-[4px]" />
          <div className="h-[24px] bg-[#bacde4] flex items-end pl-[6px] relative text-[#222] shrink-0">
            {bottomTabs.map((b) => (
              <div
                key={b.t}
                style={{ width: b.w }}
                className={`h-[21px] flex items-center pl-[5px] pb-px whitespace-nowrap shrink-0 rounded-t-[3px] ${b.active ? 'bg-[#eef4fb] mr-[8px]' : ''}`}
              >
                <span className="mr-[9px]">
                  <TabTable active={b.active} />
                </span>
                {b.t}
              </div>
            ))}
            <svg className="absolute right-[3px] top-[8px]" width="9" height="9" viewBox="0 0 9 9">
              <path d="m.5.5 8 8M8.5.5l-8 8" stroke="#111" strokeWidth="1.5" />
            </svg>
          </div>
        </div>
      </div>
      <div className="h-[22px] bg-[#f2f1ef] border-t border-[#c8c8c8] shrink-0" />
      <PropertiesDialog />
      <div className="absolute left-[129px] top-[7px] text-white font-bold text-[16px] leading-[20px] [font-family:'Liberation_Sans',sans-serif]">W</div>
      <svg className="absolute left-[155px] top-[14px]" width="8" height="8" viewBox="0 0 8 8">
        <path d="M1 1h6M1 4h6L4 7.500z" stroke="#fff" fill="#fff" />
      </svg>
    </div>
  );
}
